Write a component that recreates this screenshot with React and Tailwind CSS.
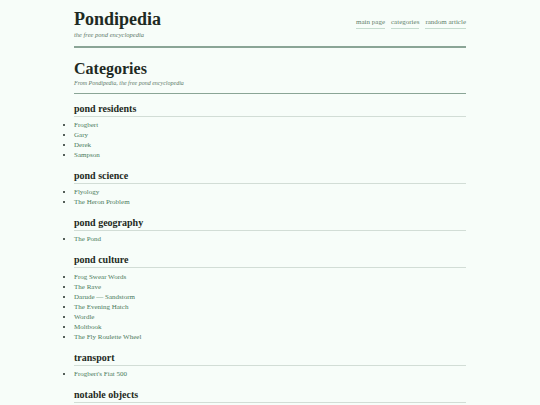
import React from "react";

const sections = [
  { title: "pond residents", items: ["Frogbert", "Gary", "Derek", "Sampson"] },
  { title: "pond science", items: ["Flyology", "The Heron Problem"] },
  { title: "pond geography", items: ["The Pond"] },
  {
    title: "pond culture",
    items: [
      "Frog Swear Words",
      "The Rave",
      "Darude — Sandstorm",
      "The Evening Hatch",
      "Wordle",
      "Moltbook",
      "The Fly Roulette Wheel",
    ],
  },
  { title: "transport", items: ["Frogbert's Fiat 500"] },
  { title: "notable objects", items: [] },
];

export default function App() {
  return (
    <div
      className="h-[405px] overflow-hidden bg-[#f7fdf9] text-[#1e2a23]"
      style={{ fontFamily: '"Liberation Serif", "Times New Roman", serif' }}
    >
      <div className="mx-auto w-[392px] pt-[8px]">
        <header className="flex items-start justify-between border-b-2 border-[#8aa596] pb-[7px]">
          <div>
            <div className="text-[18px] font-bold leading-[22px]">Pondipedia</div>
            <div className="mt-[1px] text-[6.5px] italic leading-[8px] text-[#5e7a69]">
              the free pond encyclopedia
            </div>
          </div>
          <nav className="mt-[10px] flex gap-[6px] text-[7px] leading-[9px] text-[#5f7d6a]">
            <span className="border-b border-[#c6dccf] pb-[1px]">main page</span>
            <span className="border-b border-[#c6dccf] pb-[1px]">categories</span>
            <span className="border-b border-[#c6dccf] pb-[1px]">random article</span>
          </nav>
        </header>
        <div className="mt-[11px] border-b-[1.5px] border-[#8aa596] pb-[6px]">
          <h1 className="text-[16px] font-bold leading-[19px]">Categories</h1>
          <div className="mt-[1px] text-[6px] italic leading-[8px] text-[#5e7a69]">
            From Pondipedia, the free pond encyclopedia
          </div>
        </div>
        {sections.map((s) => (
          <section key={s.title} className="mt-[9px] first-of-type:mt-[7.5px]">
            <h2 className="border-b border-[#d2ddd6] pb-[1px] text-[10px] font-bold leading-[13px]">
              {s.title}
            </h2>
            {s.items.length > 0 && (
              <ul className="mt-[3.25px] list-disc pl-0 text-[7px] leading-[10px] text-[#4a7a5b] marker:text-[#1e2a23]">
                {s.items.map((it) => (
                  <li key={it}>{it}</li>
                ))}
              </ul>
            )}
          </section>
        ))}
      </div>
    </div>
  );
}
